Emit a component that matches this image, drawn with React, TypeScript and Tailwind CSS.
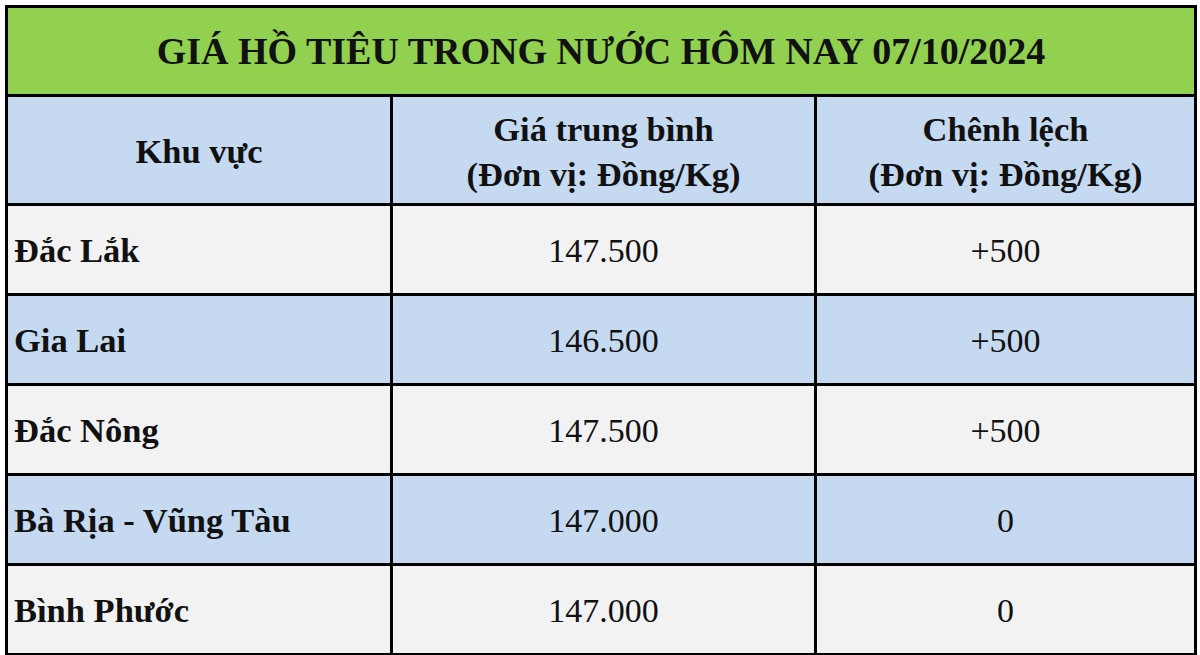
const ROWS = [
  { region: "Đắc Lắk", price: "147.500", diff: "+500" },
  { region: "Gia Lai", price: "146.500", diff: "+500" },
  { region: "Đắc Nông", price: "147.500", diff: "+500" },
  { region: "Bà Rịa - Vũng Tàu", price: "147.000", diff: "0" },
  { region: "Bình Phước", price: "147.000", diff: "0" },
];

export default function App() {
  return (
    <div className="min-h-screen bg-white p-[5px]">
      <table className="w-[1192px] table-fixed border-collapse border-[3px] border-black font-[Liberation_Serif,Times_New_Roman,serif] text-[#111]">
        <colgroup>
          <col className="w-[385px]" />
          <col className="w-[424px]" />
          <col />
        </colgroup>
        <thead>
          <tr>
            <th
              colSpan={3}
              className="h-[89px] border-[3px] border-black bg-[#92d050] text-center text-[38px] font-bold"
            >
              GIÁ HỒ TIÊU TRONG NƯỚC HÔM NAY 07/10/2024
            </th>
          </tr>
          <tr className="bg-[#c5d9f1] text-[34.5px] font-bold leading-[45px]">
            <th className="h-[109px] border-[3px] border-black pt-[3px] text-center">Khu vực</th>
            <th className="border-[3px] border-black pt-[3px] text-center">
              Giá trung bình
              <br />
              (Đơn vị: Đồng/Kg)
            </th>
            <th className="border-[3px] border-black pt-[3px] text-center">
              Chênh lệch
              <br />
              (Đơn vị: Đồng/Kg)
            </th>
          </tr>
        </thead>
        <tbody>
          {ROWS.map((r, i) => (
            <tr key={r.region} className={i % 2 === 0 ? "bg-[#f2f2f2]" : "bg-[#c5d9f1]"}>
              <td className="h-[90px] border-[3px] border-black pt-[2px] pl-[6px] text-left text-[34.5px] font-bold">
                {r.region}
              </td>
              <td className="border-[3px] border-black pt-[2px] text-center text-[34px]">{r.price}</td>
              <td className="border-[3px] border-black pt-[2px] text-center text-[34px]">{r.diff}</td>
            </tr>
          ))}
        </tbody>
      </table>
    </div>
  );
}
